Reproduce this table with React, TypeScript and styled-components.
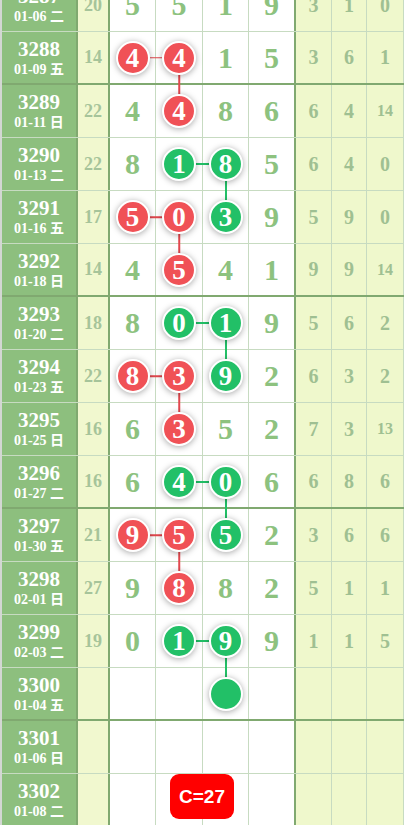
import React from 'react';
import styled, { createGlobalStyle } from 'styled-components';

const GlobalStyle = createGlobalStyle`
    html, body {
        margin: 0;
        padding: 0;
        background: #ffffff;
        overflow: hidden;
    }
`;

const SERIF = '"Liberation Serif", "Noto Sans CJK SC", serif';
const ROW_H = 53;
const LINE = '#c7dbc1';
const THICK = '#80a970';

type Mark = 'r' | 'g' | null;

interface RowData {
    issue: string;
    date: string;
    sum: string;
    digits: (number | null)[];
    marks: Mark[];
    right: string[];
    h?: number; // horizontal link from this col to the next
    v?: number; // vertical link from this col to the next row
}

const rows: RowData[] = [
    { issue: '3287', date: '01-06 二', sum: '20', digits: [5, 5, 1, 9], marks: [null, null, null, null], right: ['3', '1', '0'] },
    { issue: '3288', date: '01-09 五', sum: '14', digits: [4, 4, 1, 5], marks: ['r', 'r', null, null], right: ['3', '6', '1'], h: 0, v: 1 },
    { issue: '3289', date: '01-11 日', sum: '22', digits: [4, 4, 8, 6], marks: [null, 'r', null, null], right: ['6', '4', '14'] },
    { issue: '3290', date: '01-13 二', sum: '22', digits: [8, 1, 8, 5], marks: [null, 'g', 'g', null], right: ['6', '4', '0'], h: 1, v: 2 },
    { issue: '3291', date: '01-16 五', sum: '17', digits: [5, 0, 3, 9], marks: ['r', 'r', 'g', null], right: ['5', '9', '0'], h: 0, v: 1 },
    { issue: '3292', date: '01-18 日', sum: '14', digits: [4, 5, 4, 1], marks: [null, 'r', null, null], right: ['9', '9', '14'] },
    { issue: '3293', date: '01-20 二', sum: '18', digits: [8, 0, 1, 9], marks: [null, 'g', 'g', null], right: ['5', '6', '2'], h: 1, v: 2 },
    { issue: '3294', date: '01-23 五', sum: '22', digits: [8, 3, 9, 2], marks: ['r', 'r', 'g', null], right: ['6', '3', '2'], h: 0, v: 1 },
    { issue: '3295', date: '01-25 日', sum: '16', digits: [6, 3, 5, 2], marks: [null, 'r', null, null], right: ['7', '3', '13'] },
    { issue: '3296', date: '01-27 二', sum: '16', digits: [6, 4, 0, 6], marks: [null, 'g', 'g', null], right: ['6', '8', '6'], h: 1, v: 2 },
    { issue: '3297', date: '01-30 五', sum: '21', digits: [9, 5, 5, 2], marks: ['r', 'r', 'g', null], right: ['3', '6', '6'], h: 0, v: 1 },
    { issue: '3298', date: '02-01 日', sum: '27', digits: [9, 8, 8, 2], marks: [null, 'r', null, null], right: ['5', '1', '1'] },
    { issue: '3299', date: '02-03 二', sum: '19', digits: [0, 1, 9, 9], marks: [null, 'g', 'g', null], right: ['1', '1', '5'], h: 1, v: 2 },
    { issue: '3300', date: '01-04 五', sum: '', digits: [null, null, null, null], marks: [null, null, 'g', null], right: ['', '', ''] },
    { issue: '3301', date: '01-06 日', sum: '', digits: [null, null, null, null], marks: [null, null, null, null], right: ['', '', ''] },
    { issue: '3302', date: '01-08 二', sum: '', digits: [null, null, null, null], marks: [null, null, null, null], right: ['', '', ''] },
];

const DIGIT_W = [46, 47, 46, 47];
const RIGHT_W = [36, 35, 37];

const Page = styled.div`
    border-left: 2px solid #d3d7d3;
    width: 402px;
    height: 825px;
    overflow: hidden;
`;

const Table = styled.div`
    margin-top: -21px;
`;

const Row = styled.div<{ $thick: boolean }>`
    display: flex;
    height: ${ROW_H}px;
    box-sizing: border-box;
    border-bottom: ${({ $thick }) => ($thick ? `2px solid ${THICK}` : `1px solid ${LINE}`)};
`;

const IssueCell = styled.div`
    width: 76px;
    flex: none;
    box-sizing: border-box;
    border-right: 2px solid ${THICK};
    background: #8dbf7e;
    color: #ffffff;
    font-family: ${SERIF};
    font-weight: bold;
    display: flex;
    flex-direction: column;
    align-items: center;
    justify-content: center;
`;

const IssueNo = styled.div`
    font-size: 21px;
    line-height: 22px;
`;

const IssueDate = styled.div`
    font-size: 14px;
    line-height: 16px;
    margin-top: 2px;
`;

const SumCell = styled.div`
    width: 32px;
    flex: none;
    box-sizing: border-box;
    border-right: 2px solid ${THICK};
    background: #f1f8cf;
    color: #a6c49a;
    font-family: ${SERIF};
    font-weight: bold;
    font-size: 18px;
    display: flex;
    align-items: center;
    justify-content: center;
`;

const DigitCell = styled.div<{ $w: number; $last: boolean }>`
    position: relative;
    width: ${({ $w }) => $w}px;
    flex: none;
    box-sizing: border-box;
    border-right: ${({ $last }) => ($last ? `2px solid ${THICK}` : `1px solid ${LINE}`)};
    background: #ffffff;
    color: #8dc27f;
    font-family: ${SERIF};
    font-weight: bold;
    font-size: 30px;
    display: flex;
    align-items: center;
    justify-content: center;
`;

const Ball = styled.div<{ $c: 'r' | 'g' }>`
    position: relative;
    z-index: 3;
    width: 34px;
    height: 34px;
    box-sizing: border-box;
    border-radius: 50%;
    border: 2px solid #ffffff;
    background: ${({ $c }) => ($c === 'r' ? '#f05156' : '#22c067')};
    box-shadow: 0 1px 6px rgba(0, 0, 0, 0.35);
    color: #ffffff;
    font-size: 27px;
    line-height: 30px;
    text-align: center;
`;

const HLink = styled.div<{ $c: 'r' | 'g'; $len: number }>`
    position: absolute;
    z-index: 2;
    left: 50%;
    top: 50%;
    width: ${({ $len }) => $len}px;
    height: ${({ $c }) => ($c === 'r' ? 1.5 : 2)}px;
    transform: translateY(-50%);
    background: ${({ $c }) => ($c === 'r' ? '#e2474d' : '#22c067')};
`;

const VLink = styled.div<{ $c: 'r' | 'g' }>`
    position: absolute;
    z-index: 2;
    left: 50%;
    top: 50%;
    height: ${ROW_H}px;
    width: ${({ $c }) => ($c === 'r' ? 1.5 : 2)}px;
    transform: translateX(-50%);
    background: ${({ $c }) => ($c === 'r' ? '#e2474d' : '#22c067')};
`;

const RightCell = styled.div<{ $w: number; $small: boolean }>`
    width: ${({ $w }) => $w}px;
    flex: none;
    box-sizing: border-box;
    border-right: 1px solid ${LINE};
    background: #eff8cc;
    color: #9fc092;
    font-family: ${SERIF};
    font-weight: bold;
    font-size: ${({ $small }) => ($small ? 16 : 20)}px;
    display: flex;
    align-items: center;
    justify-content: center;
`;

const Badge = styled.div`
    position: absolute;
    z-index: 3;
    left: 14px;
    top: 0;
    width: 64px;
    height: 45px;
    border-radius: 9px;
    background: #ff0000;
    color: #ffffff;
    font-family: "Liberation Sans", Arial, sans-serif;
    font-weight: bold;
    font-size: 19px;
    display: flex;
    align-items: center;
    justify-content: center;
`;

const App: React.FC = () => {
    return (
        <Page>
            <GlobalStyle />
            <Table>
                {rows.map((row) => {
                    const n = Number(row.issue);
                    const thick = (n - 3288) % 4 === 0;
                    return (
                        <Row key={row.issue} $thick={thick}>
                            <IssueCell>
                                <IssueNo>{row.issue}</IssueNo>
                                <IssueDate>{row.date}</IssueDate>
                            </IssueCell>
                            <SumCell>{row.sum}</SumCell>
                            {DIGIT_W.map((w, i) => {
                                const mark = row.marks[i];
                                const d = row.digits[i];
                                return (
                                    <DigitCell key={i} $w={w} $last={i === 3}>
                                        {mark ? <Ball $c={mark}>{d ?? ''}</Ball> : d}
                                        {mark && row.h === i && (
                                            <HLink $c={mark} $len={DIGIT_W[i] / 2 + DIGIT_W[i + 1] / 2} />
                                        )}
                                        {mark && row.v === i && <VLink $c={mark} />}
                                        {row.issue === '3302' && i === 1 && <Badge>C=27</Badge>}
                                    </DigitCell>
                                );
                            })}
                            {RIGHT_W.map((w, i) => (
                                <RightCell key={i} $w={w} $small={row.right[i].length > 1}>
                                    {row.right[i]}
                                </RightCell>
                            ))}
                        </Row>
                    );
                })}
            </Table>
        </Page>
    );
};

export default App;
